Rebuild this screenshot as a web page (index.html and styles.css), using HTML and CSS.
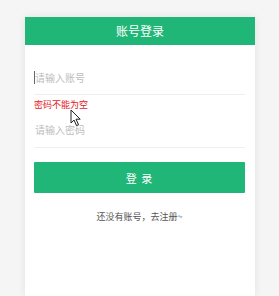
FILE: index.html
```html
<!DOCTYPE html>
<html lang="zh-CN">
<head>
  <meta charset="UTF-8">
  <meta name="viewport" content="width=device-width, initial-scale=1.0">
  <title>账号登录</title>
  <link rel="stylesheet" href="styles.css">
</head>
<body>
  <div class="card">
    <div class="card-header">账号登录</div>
    <form class="login-form">
      <div class="field focused">
        <input type="text" placeholder="请输入账号">
      </div>
      <div class="error">密码不能为空</div>
      <div class="field">
        <input type="password" placeholder="请输入密码">
      </div>
      <button type="button" class="login-btn">登 录</button>
      <p class="register">还没有账号，去注册~</p>
    </form>
  </div>

  <svg class="pointer" width="12" height="18" viewBox="0 0 12 18">
    <path d="M1 1 L1 14 L4 11 L6.5 16.5 L8.5 15.6 L6 10.2 L10.2 10.2 Z" fill="#fff" stroke="#222" stroke-width="1" stroke-linejoin="round"/>
  </svg>
</body>
</html>
```

FILE: styles.css
```css
body {
  margin: 0;
  padding-top: 17px;
  background-color: #f5f5f5;
  font-family: "Noto Sans CJK SC", "Microsoft YaHei", sans-serif;
  overflow: hidden;
}
.card {
  width: 230px;
  height: 279px;
  margin: 0 0 0 25px;
  background: #fff;
  box-shadow: 0 0 8px rgba(0, 0, 0, 0.08);
}
.card-header {
  height: 28px;
  line-height: 28px;
  background: #1fb677;
  color: #fff;
  font-size: 12px;
  text-align: center;
}
.login-form {
  padding: 0 10px 0 9px;
  margin: 0;
}
.field {
  position: relative;
  border-bottom: 1px solid #efefef;
}
.field:first-child {
  margin-top: 15px;
}
.field input {
  display: block;
  width: 100%;
  height: 34px;
  padding: 0 0 0 1px;
  border: none;
  outline: none;
  background: transparent;
  font-family: inherit;
  font-size: 10px;
  color: #333;
}
.field + .error + .field input {
  height: 36px;
}
.field input::placeholder {
  color: #bdbdbd;
}
.field.focused::before {
  content: "";
  position: absolute;
  left: 0;
  top: 11px;
  width: 1px;
  height: 13px;
  background: #666;
}
.error {
  margin-top: 4px;
  line-height: 12px;
  font-size: 9px;
  color: #e8151b;
}
.login-btn {
  display: block;
  width: 100%;
  height: 31px;
  margin-top: 14px;
  border: none;
  border-radius: 1px;
  background: #1fb677;
  color: #fff;
  font-family: inherit;
  font-size: 11px;
  letter-spacing: 1px;
  cursor: pointer;
}
.register {
  margin: 18px 0 0;
  line-height: 12px;
  font-size: 9px;
  color: #555;
  text-align: center;
}
.pointer {
  position: absolute;
  left: 70px;
  top: 109px;
}
```
